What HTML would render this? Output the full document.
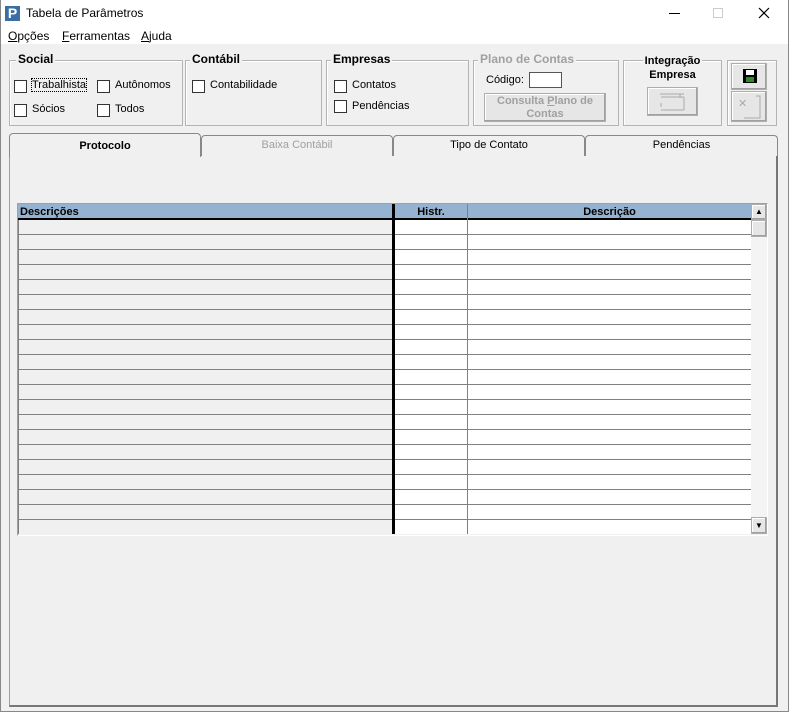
<!DOCTYPE html>
<html><head><meta charset="utf-8"><style>
*{margin:0;padding:0;box-sizing:border-box}
body{width:789px;height:712px;background:#f0f0f0;font-family:"Liberation Sans",sans-serif;font-size:11px;color:#000;position:relative;overflow:hidden}
.a{position:absolute}
.gb{position:absolute;border:1px solid #b4b4b4;box-shadow:inset 1px 1px 0 #fff}
.lg{position:absolute;top:-9px;left:6px;background:#f0f0f0;padding:0 2px;font-weight:bold;font-size:12px}
.cb{position:absolute;width:13px;height:13px;border:1px solid #333;background:#fff}
.t{position:absolute;white-space:nowrap}
.btn{position:absolute;border:1px solid #adadad;background:#e6e6e6;box-shadow:inset -1px -1px 0 #a0a0a0,inset 1px 1px 0 #fff}
</style></head><body>
<div class="a" style="left:0;top:0;width:789px;height:44px;background:#fff"></div>
<div class="a" style="left:5px;top:6px;width:15px;height:15px;background:#3b6ea5;color:#fff;font-weight:bold;font-size:14px;line-height:15px;text-align:center">P</div>
<div class="t" style="left:26px;top:6px;font-size:12px">Tabela de Parâmetros</div>
<div class="a" style="left:669px;top:13px;width:11px;height:1px;background:#000"></div>
<div class="a" style="left:713px;top:8px;width:10px;height:10px;border:1px solid #ccc"></div>
<svg class="a" style="left:758px;top:7px" width="12" height="12"><path d="M1 1L11 11M11 1L1 11" stroke="#000" stroke-width="1.2"/></svg>
<div class="t" style="left:8px;top:29px;font-size:12px"><u>O</u>pções</div>
<div class="t" style="left:62px;top:29px;font-size:12px"><u>F</u>erramentas</div>
<div class="t" style="left:141px;top:29px;font-size:12px"><u>A</u>juda</div>

<div class="gb" style="left:9px;top:60px;width:174px;height:66px"><span class="lg">Social</span></div>
<div class="cb" style="left:14px;top:80px"></div><div class="t" style="left:32px;top:79px;outline:1px dotted #000">Trabalhista</div>
<div class="cb" style="left:97px;top:80px"></div><div class="t" style="left:115px;top:79px">Autônomos</div>
<div class="cb" style="left:14px;top:104px"></div><div class="t" style="left:32px;top:103px">Sócios</div>
<div class="cb" style="left:97px;top:104px"></div><div class="t" style="left:115px;top:103px">Todos</div>

<div class="gb" style="left:185px;top:60px;width:137px;height:66px"><span class="lg" style="left:4px">Contábil</span></div>
<div class="cb" style="left:192px;top:80px"></div><div class="t" style="left:210px;top:79px">Contabilidade</div>

<div class="gb" style="left:326px;top:60px;width:143px;height:66px"><span class="lg" style="left:4px">Empresas</span></div>
<div class="cb" style="left:334px;top:80px"></div><div class="t" style="left:352px;top:79px">Contatos</div>
<div class="cb" style="left:334px;top:100px"></div><div class="t" style="left:352px;top:100px">Pendências</div>

<div class="gb" style="left:473px;top:60px;width:146px;height:66px"><span class="lg" style="left:4px;color:#a0a0a0">Plano de Contas</span></div>
<div class="t" style="left:486px;top:74px">Código:</div>
<div class="a" style="left:529px;top:72px;width:33px;height:16px;border:1px solid #555;background:#fff"></div>
<div class="btn" style="left:484px;top:93px;width:122px;height:29px;color:#a0a0a0;font-weight:bold;text-align:center;line-height:13px;padding-top:1px">Consulta <u>P</u>lano de<br>Contas</div>

<div class="gb" style="left:623px;top:60px;width:99px;height:66px"></div>
<div class="t" style="left:623px;top:54px;width:99px;text-align:center;font-weight:bold;line-height:14px"><span style="background:#f0f0f0;padding:0 2px">Integração</span><br>Empresa</div>
<div class="btn" style="left:647px;top:87px;width:51px;height:29px"><svg class="a" style="left:10px;top:3px" width="30" height="22"><path d="M2 3H26M22 3V7M3 6H26M26 6V19M3 19H26M3 12V16" stroke="#aaa" fill="none"/></svg></div>

<div class="gb" style="left:727px;top:60px;width:50px;height:66px"></div>
<div class="btn" style="left:731px;top:63px;width:36px;height:27px"><div class="a" style="left:11px;top:5px;width:14px;height:14px;background:#000"></div><div class="a" style="left:14px;top:6px;width:8px;height:5px;background:#fff"></div><div class="a" style="left:14px;top:13px;width:8px;height:5px;background:#2b8a2b"></div></div>
<div class="btn" style="left:731px;top:91px;width:36px;height:31px"><div class="t" style="left:6px;top:5px;color:#aaa;font-size:11px">✕</div><svg class="a" style="left:0;top:0" width="36" height="31"><path d="M24 4H28V26H12" stroke="#aaa" fill="none"/></svg></div>

<div class="a" style="left:9px;top:155px;width:769px;height:552px;border:1px solid #a0a0a0;border-right:2px solid #777;border-bottom:2px solid #777;background:#f0f0f0"></div>
<div class="a" style="left:201px;top:135px;width:192px;height:21px;border:1px solid #888;border-bottom:none;border-radius:4px 4px 0 0;background:#f0f0f0;text-align:center;line-height:19px;color:#a0a0a0">Baixa Contábil</div>
<div class="a" style="left:393px;top:135px;width:192px;height:21px;border:1px solid #888;border-bottom:none;border-radius:4px 4px 0 0;background:#f0f0f0;text-align:center;line-height:19px">Tipo de Contato</div>
<div class="a" style="left:585px;top:135px;width:193px;height:21px;border:1px solid #888;border-bottom:none;border-radius:4px 4px 0 0;background:#f0f0f0;text-align:center;line-height:19px">Pendências</div>
<div class="a" style="left:9px;top:133px;width:192px;height:24px;border:1px solid #888;border-bottom:none;border-radius:4px 4px 0 0;background:#f0f0f0;text-align:center;line-height:24px;font-weight:bold">Protocolo</div>

<div class="a" style="left:17px;top:203px;width:751px;height:333px;border:1px solid #fff;border-top-color:#a0a0a0;border-left-color:#a0a0a0"></div>
<div class="a" style="left:18px;top:204px;width:733px;height:16px;background:#95b3d0;border-bottom:2px solid #000"></div>
<div class="t" style="left:20px;top:205px;font-weight:bold;font-size:11px;line-height:15px">Descrições</div>
<div class="t" style="left:395px;top:205px;width:72px;text-align:center;font-weight:bold;font-size:11px;line-height:15px">Histr.</div>
<div class="t" style="left:468px;top:205px;width:283px;text-align:center;font-weight:bold;font-size:11px;line-height:15px">Descrição</div>
<div class="a" style="left:18px;top:220px;width:374px;height:314px;background:repeating-linear-gradient(#f0f0f0 0 14px,#808080 14px 15px);border-left:1px solid #808080"></div>
<div class="a" style="left:392px;top:220px;width:359px;height:314px;background:repeating-linear-gradient(#fff 0 14px,#808080 14px 15px)"></div>
<div class="a" style="left:392px;top:204px;width:3px;height:330px;background:#000"></div>
<div class="a" style="left:467px;top:204px;width:1px;height:330px;background:#808080"></div>
<div class="a" style="left:751px;top:204px;width:16px;height:330px;background:#f4f4f4"></div>
<div class="btn" style="left:751px;top:204px;width:16px;height:16px;font-size:8px;text-align:center;line-height:14px">▲</div>
<div class="btn" style="left:751px;top:220px;width:16px;height:17px"></div>
<div class="btn" style="left:751px;top:517px;width:16px;height:17px;font-size:8px;text-align:center;line-height:15px">▼</div>
<div class="a" style="left:0;top:0;width:789px;height:712px;border:1px solid #888;border-top:none"></div>
</body></html>
